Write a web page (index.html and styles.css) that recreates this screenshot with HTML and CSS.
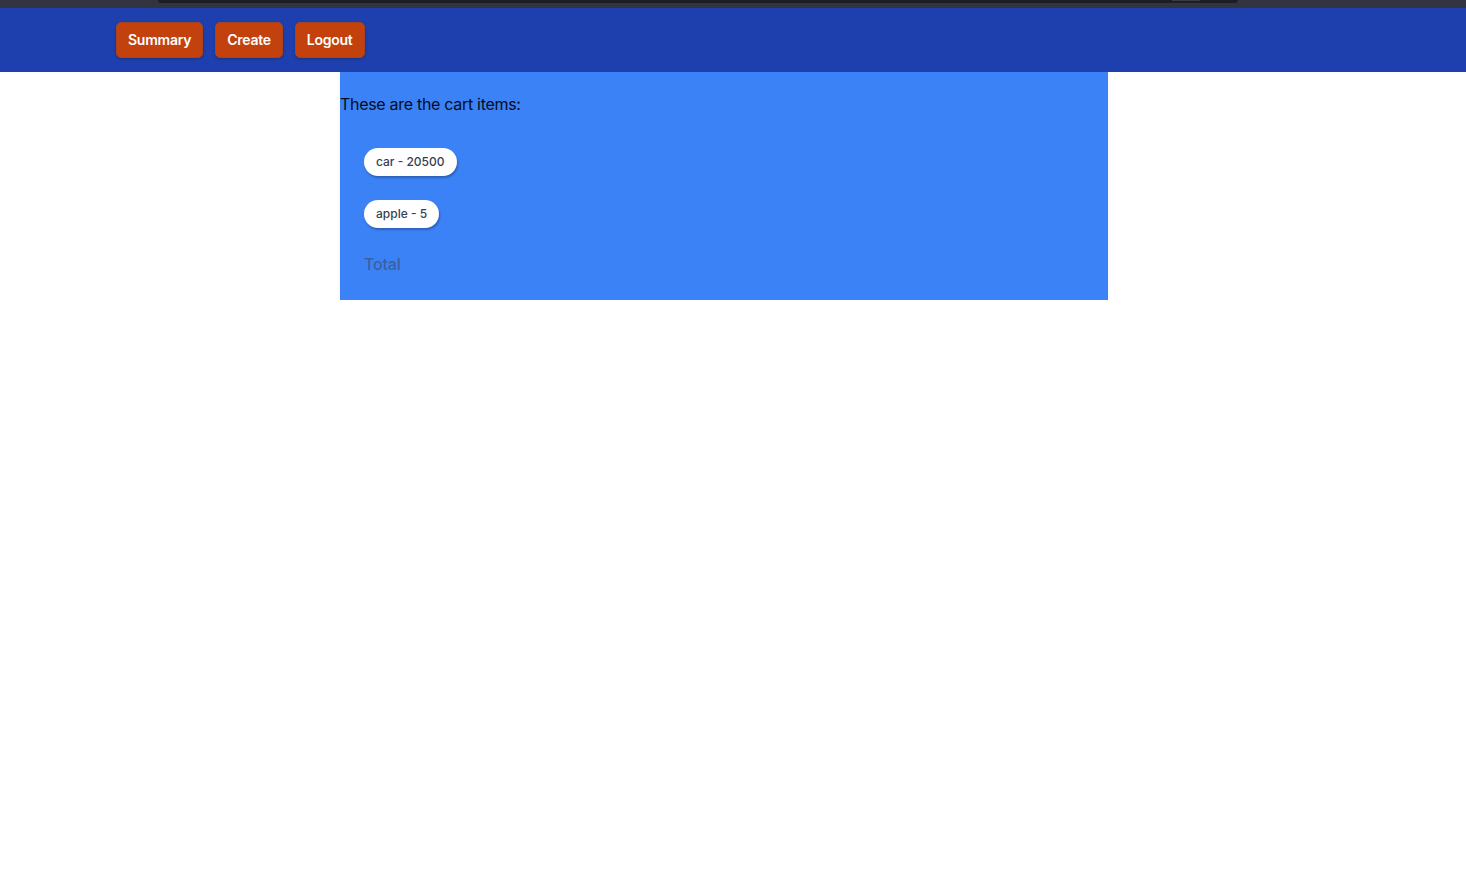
FILE: index.html
```html
<!DOCTYPE html>
<html lang="en">
<head>
<meta charset="utf-8">
<title>Cart</title>
<link rel="stylesheet" href="styles.css">
</head>
<body>
<div class="chrome"><div class="chrome-bar"><span class="chrome-tab"></span></div></div>
<nav class="nav">
  <button class="nav-btn">Summary</button>
  <button class="nav-btn">Create</button>
  <button class="nav-btn">Logout</button>
</nav>
<main class="cart">
  <p class="cart-title">These are the cart items:</p>
  <ul class="cart-list">
    <li class="chip">car - 20500</li>
    <li class="chip">apple - 5</li>
  </ul>
  <div class="total">Total</div>
</main>
</body>
</html>
```
FILE: styles.css
```css
* { box-sizing: border-box; }
html, body { margin: 0; padding: 0; background: #ffffff; }
body { font-family: Inter, "Noto Sans", "Liberation Sans", sans-serif; }

.chrome {
  height: 8px;
  background: #32343f;
  padding: 0 228px 0 158px;
}
.chrome-bar {
  height: 3px;
  background: #1d1e23;
  border-radius: 0 0 3px 3px;
  display: flex;
  justify-content: flex-end;
  padding-right: 38px;
}
.chrome-tab {
  width: 28px;
  height: 1px;
  background: #3a3b42;
}

.nav {
  height: 64px;
  background: #1e40af;
  display: flex;
  align-items: center;
  gap: 12px;
  padding-left: 116px;
}
.nav-btn {
  font-family: inherit;
  font-size: 14px;
  font-weight: 600;
  line-height: 20px;
  letter-spacing: -0.25px;
  color: #ffffff;
  background: #c2410c;
  border: 1px solid #a5441f;
  border-radius: 5px;
  padding: 7px 11px;
  box-shadow: 0 1px 3px rgba(0,0,0,0.25);
  cursor: pointer;
}

.cart {
  width: 768px;
  margin-left: 340px;
  background: #3b82f6;
  padding: 20px 0 24px 0;
  box-shadow: 0 2px 4px rgba(0,0,0,0.08);
}
.cart-title {
  margin: 0;
  font-size: 16px;
  line-height: 24px;
  letter-spacing: -0.3px;
  color: #050d22;
}
.cart-list {
  list-style: none;
  margin: 32px 0 0 0;
  padding: 0 0 0 24px;
  display: flex;
  flex-direction: column;
  align-items: flex-start;
  gap: 24px;
}
.chip {
  background: #ffffff;
  color: #374151;
  font-size: 12px;
  font-weight: 500;
  line-height: 16px;
  padding: 6px 12px;
  border-radius: 9999px;
  box-shadow: 1px 2px 2px rgba(0,0,0,0.25);
}
.total {
  margin-top: 24px;
  padding-left: 24px;
  font-size: 16px;
  font-weight: 500;
  line-height: 24px;
  letter-spacing: -0.2px;
  color: #3d5f9e;
}
```
